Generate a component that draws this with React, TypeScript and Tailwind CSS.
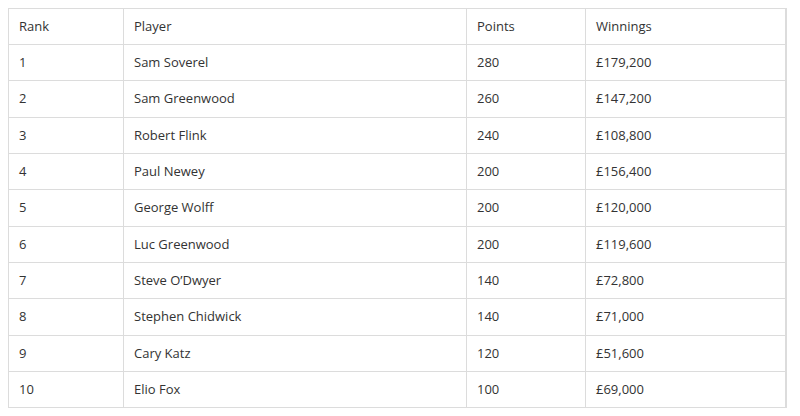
import React from "react";

const rows: [string, string, string, string][] = [
  ["1", "Sam Soverel", "280", "£179,200"],
  ["2", "Sam Greenwood", "260", "£147,200"],
  ["3", "Robert Flink", "240", "£108,800"],
  ["4", "Paul Newey", "200", "£156,400"],
  ["5", "George Wolff", "200", "£120,000"],
  ["6", "Luc Greenwood", "200", "£119,600"],
  ["7", "Steve O’Dwyer", "140", "£72,800"],
  ["8", "Stephen Chidwick", "140", "£71,000"],
  ["9", "Cary Katz", "120", "£51,600"],
  ["10", "Elio Fox", "100", "£69,000"],
];

const heights = [36, 36, 37, 36, 36, 37, 36, 36, 37, 36, 36];

function Row({ cells, h }: { cells: string[]; h: number }) {
  return (
    <div className="flex border-b border-[#dcdcdc]" style={{ height: h }}>
      <div className="w-[115px] border-r border-[#dcdcdc] pl-[10px] flex items-center">{cells[0]}</div>
      <div className="w-[343px] border-r border-[#dcdcdc] pl-[10px] flex items-center">{cells[1]}</div>
      <div className="w-[119px] border-r border-[#dcdcdc] pl-[10px] flex items-center">{cells[2]}</div>
      <div className="flex-1 pl-[10px] flex items-center">{cells[3]}</div>
    </div>
  );
}

export default function App() {
  return (
    <div className="w-[800px] h-[416px] bg-white pt-[8px] pl-[8px]" style={{ fontFamily: "'Open Sans', sans-serif" }}>
      <div className="w-[779px] border-t border-l border-r-2 border-[#dcdcdc] text-[13px] text-[#333333]">
        <Row cells={["Rank", "Player", "Points", "Winnings"]} h={heights[0]} />
        {rows.map((r, i) => (
          <Row key={i} cells={r} h={heights[i + 1]} />
        ))}
      </div>
    </div>
  );
}
